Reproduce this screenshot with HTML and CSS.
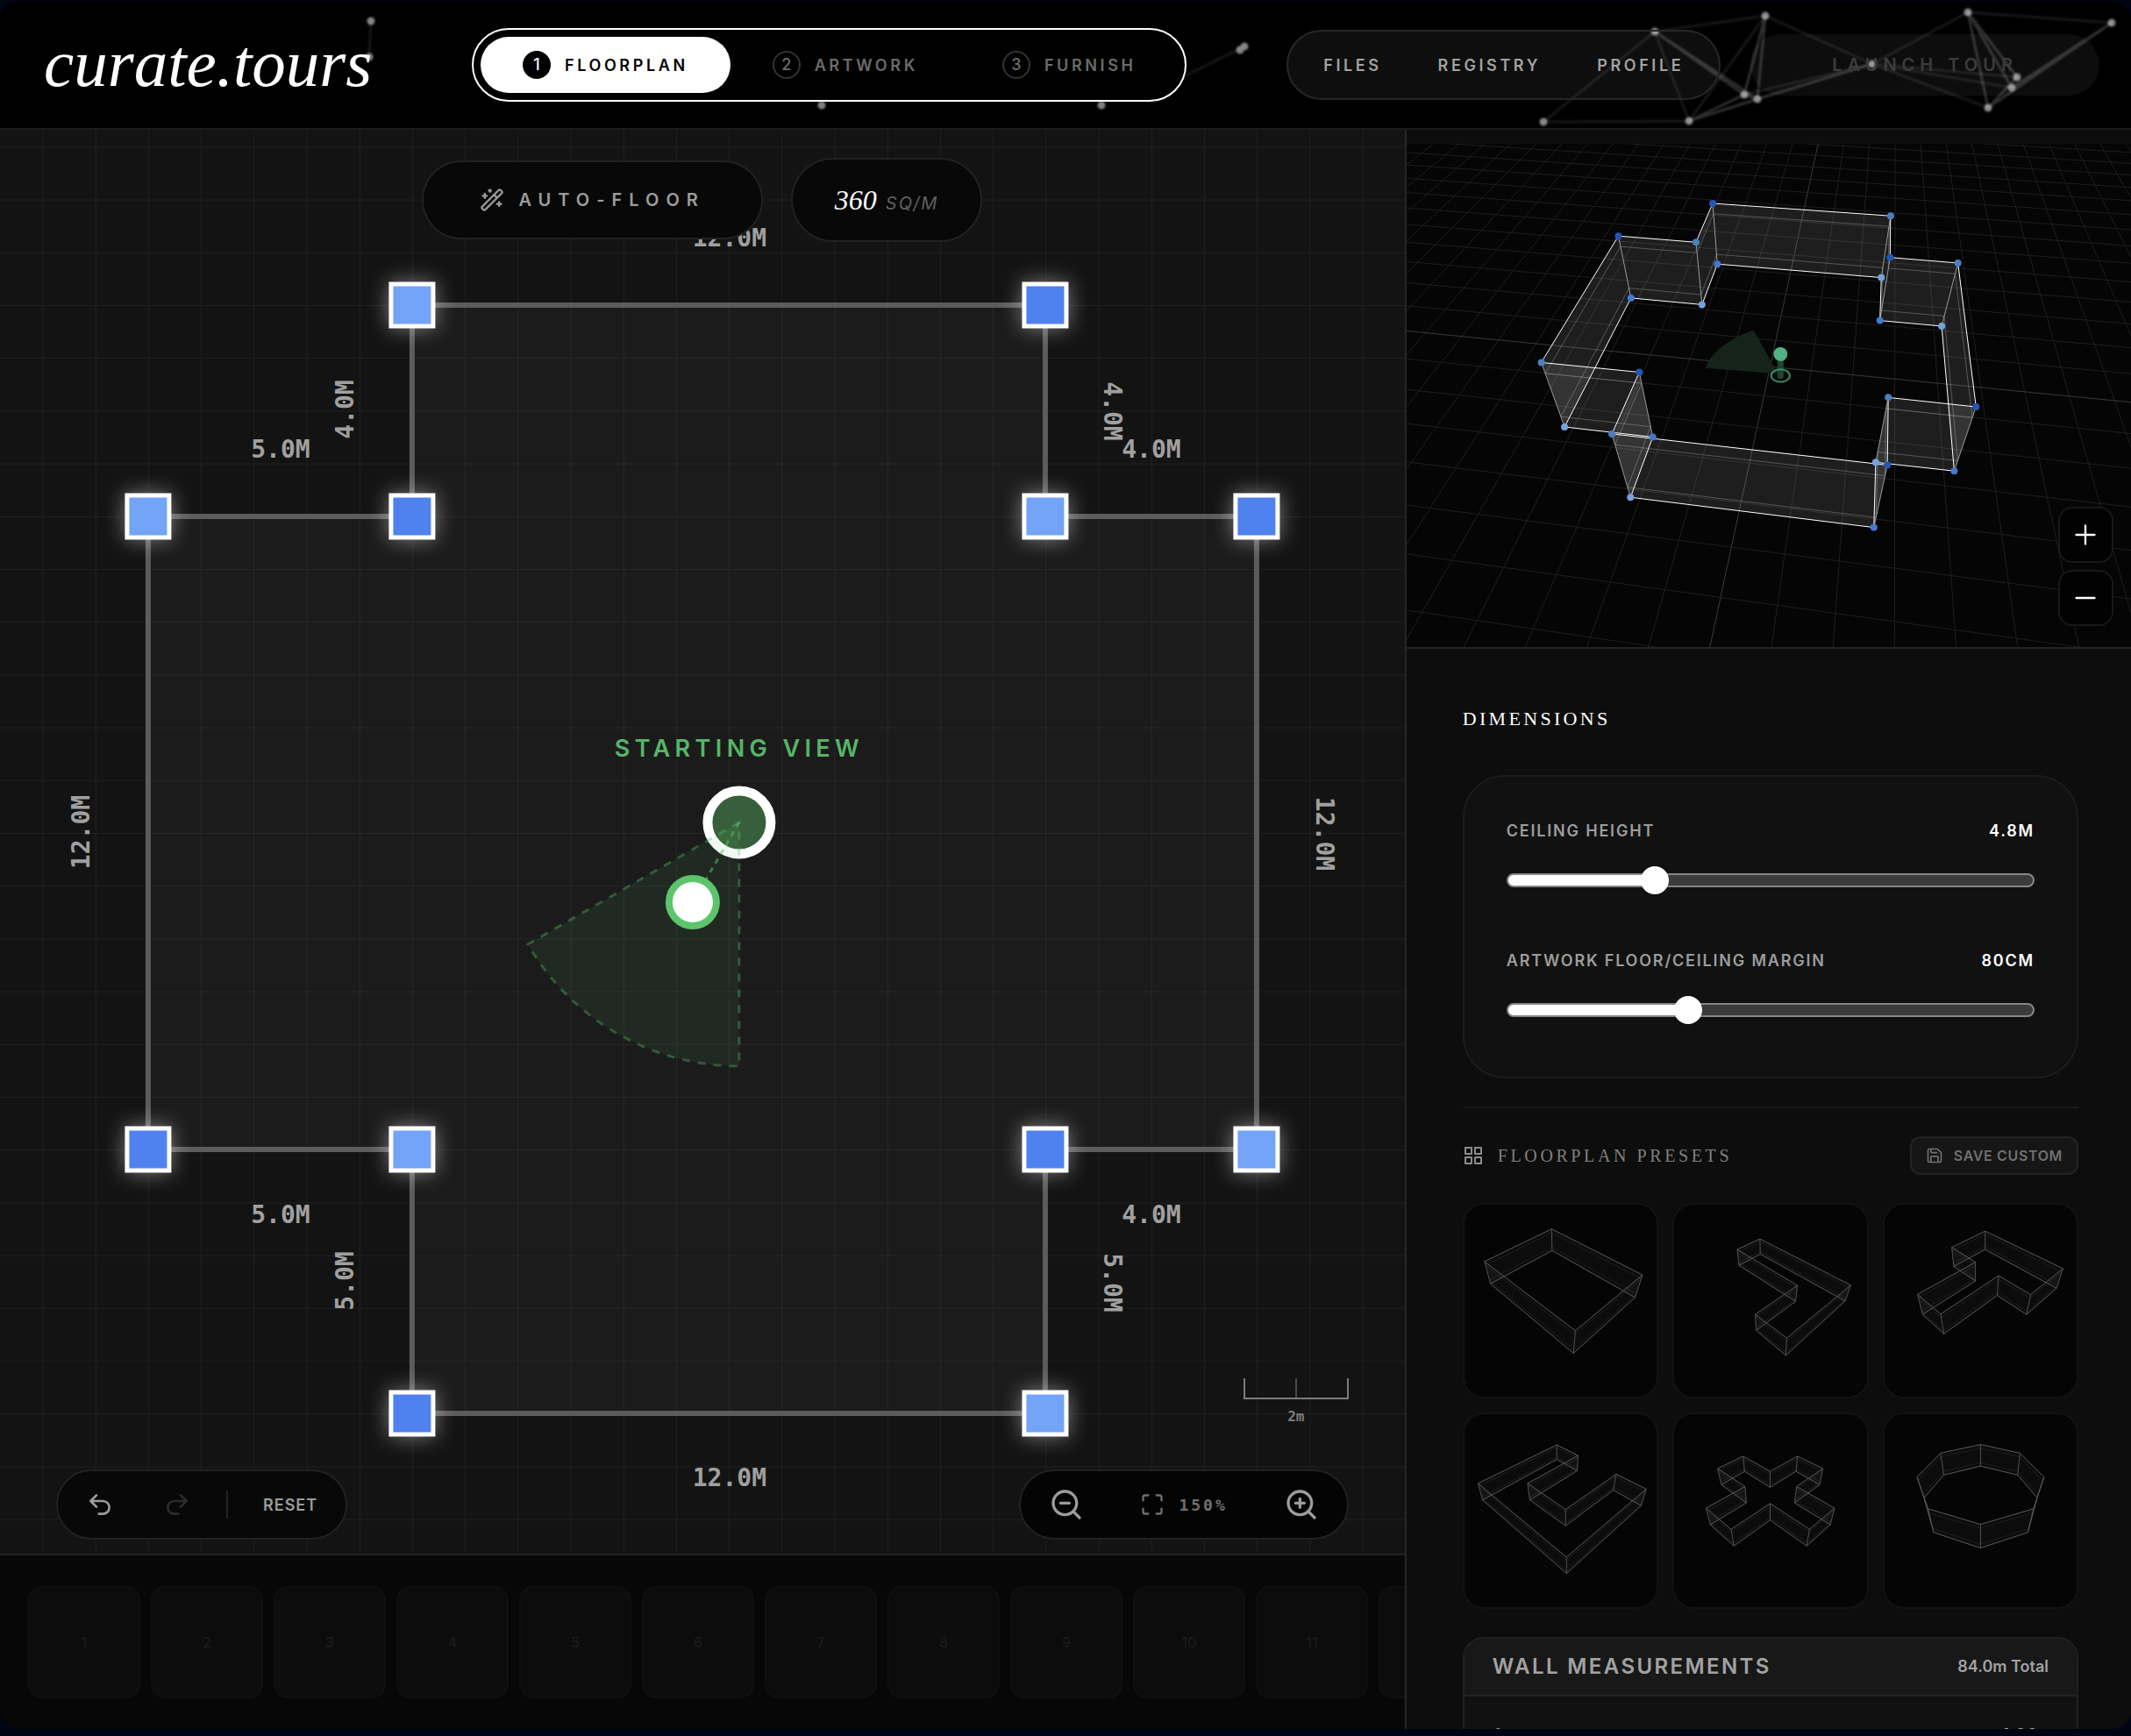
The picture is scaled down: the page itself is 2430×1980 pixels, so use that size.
FILE: index.html
```html
<!DOCTYPE html>
<html lang="en">
<head>
<meta charset="utf-8">
<title>curate.tours – Floorplan</title>
<meta name="viewport" content="width=device-width, initial-scale=1">
<link rel="stylesheet" href="styles.css">
</head>
<body>
<div class="app">
  <header class="topbar">
    <svg class="particles" viewBox="0 2 2430 144" preserveAspectRatio="xMaxYMid slice" aria-hidden="true">
      <path class="link" d="M423 24 421 65M1419 53 1340 92M1887 36 1760 139M1887 36 2013 18M1887 36 1926 138M2013 18 1926 138M2013 18 2135 73M2244 14 2135 73M2244 14 2408 26M1760 139 1926 138M2135 73 1989 108M2135 73 2300 88M2135 73 2294 100M2135 73 2267 123"/>
      <path class="link bright" d="M1887 36 1989 108M1887 36 2004 113M2013 18 1989 108M2013 18 2004 113M2244 14 2300 88M2244 14 2294 100M2244 14 2267 123M2408 26 2267 123M2408 26 2294 100M2300 88 2267 123M2135 73 2004 113M1926 138 1989 108M1926 138 2004 113M2004 113 1989 108"/>
      <path class="spark" d="M423 24h0M421 65h0M937 120h0M1256 120h0M1414 57h0M1419 53h0M1887 36h0M2013 18h0M2244 14h0M2408 26h0M2135 73h0M2300 88h0M2294 100h0M2267 123h0M1989 108h0M2004 113h0M1926 138h0M1760 139h0"/>
    </svg>
    <a class="logo" href="#">curate.tours</a>
    <nav class="stepper" aria-label="Steps">
      <button class="step active" type="button"><span class="num">1</span>FLOORPLAN</button>
      <button class="step" type="button"><span class="num">2</span>ARTWORK</button>
      <button class="step" type="button"><span class="num">3</span>FURNISH</button>
    </nav>
    <div class="account">
      <nav class="links" aria-label="Account">
        <a href="#">FILES</a>
        <a href="#">REGISTRY</a>
        <a href="#">PROFILE</a>
      </nav>
      <button class="launch" type="button" disabled>LAUNCH TOUR</button>
    </div>
  </header>

  <main class="workspace">
    <section class="editor" aria-label="Floorplan editor">
      <div class="canvas">
        <svg class="plan" viewBox="0 148 1602 1624" preserveAspectRatio="xMidYMid slice">
          <defs>
            <pattern id="metre" x="470" y="348" width="60.2" height="60.2" patternUnits="userSpaceOnUse">
              <path d="M0 0H60.2M0 0V60.2"/>
            </pattern>
          </defs>
          <path class="room" d="M470 348H1192V589H1433V1311H1192V1612H470V1311H169V589H470Z"/>
          <rect class="metres" x="-400" y="-200" width="2400" height="2400" fill="url(#metre)"/>
          <path class="walls" d="M470 348H1192V589H1433V1311H1192V1612H470V1311H169V589H470Z"/>
          <g class="nodes">
            <rect class="lit" x="446" y="324" width="48" height="48"/>
            <rect x="1168" y="324" width="48" height="48"/>
            <rect class="lit" x="1168" y="565" width="48" height="48"/>
            <rect x="1409" y="565" width="48" height="48"/>
            <rect class="lit" x="1409" y="1287" width="48" height="48"/>
            <rect x="1168" y="1287" width="48" height="48"/>
            <rect class="lit" x="1168" y="1588" width="48" height="48"/>
            <rect x="446" y="1588" width="48" height="48"/>
            <rect class="lit" x="446" y="1287" width="48" height="48"/>
            <rect x="145" y="1287" width="48" height="48"/>
            <rect class="lit" x="145" y="565" width="48" height="48"/>
            <rect x="446" y="565" width="48" height="48"/>
          </g>
          <g class="lengths">
            <text x="832" y="281">12.0M</text>
            <text x="1313" y="522">4.0M</text>
            <text x="1313" y="1395">4.0M</text>
            <text x="832" y="1695">12.0M</text>
            <text x="320" y="1395">5.0M</text>
            <text x="320" y="522">5.0M</text>
            <text transform="translate(1259 469) rotate(90)">4.0M</text>
            <text transform="translate(1501 951) rotate(90)">12.0M</text>
            <text transform="translate(1259 1463) rotate(90)">5.0M</text>
            <text transform="translate(403 1461) rotate(-90)">5.0M</text>
            <text transform="translate(102 949) rotate(-90)">12.0M</text>
            <text transform="translate(403 467) rotate(-90)">4.0M</text>
          </g>
          <g class="viewpoint">
            <text x="843" y="863">STARTING VIEW</text>
            <circle class="eye" cx="843" cy="938" r="36"/>
            <path class="cone" d="M843 938 602 1077A278 278 0 0 0 843 1216Z"/>
            <path class="aim" d="M843 938 790 1029"/>
            <circle class="handle" cx="790" cy="1029" r="27"/>
          </g>
        </svg>

        <div class="tools-top">
          <button class="auto" type="button">
            <svg class="icon s28" viewBox="0 0 24 24"><path d="m21.64 3.64-1.28-1.28a1.21 1.21 0 0 0-1.72 0L2.36 18.64a1.21 1.21 0 0 0 0 1.72l1.28 1.28a1.2 1.2 0 0 0 1.72 0L21.64 5.36a1.2 1.2 0 0 0 0-1.72M14 7l3 3M5 6v4M19 14v4M10 2v2M7 8H3M21 16h-4M11 3H9"/></svg>
            AUTO-FLOOR
          </button>
          <p class="area"><span class="area-value">360</span><span class="area-unit">SQ/M</span></p>
        </div>

        <div class="tools-bottom">
          <div class="dock">
            <button type="button" aria-label="Undo"><svg class="icon s32" viewBox="0 0 24 24"><path d="M9 14 4 9l5-5M4 9h10.5a5.5 5.5 0 0 1 0 11H11"/></svg></button>
            <button type="button" aria-label="Redo" disabled><svg class="icon s32" viewBox="0 0 24 24"><path d="m15 14 5-5-5-5M20 9H9.5a5.5 5.5 0 0 0 0 11H13"/></svg></button>
            <span class="rule"></span>
            <button class="reset" type="button">RESET</button>
          </div>
          <div class="zoom-side">
            <div class="scale"><span class="ticks"></span><span class="scale-text">2m</span></div>
            <div class="dock dark">
              <button type="button" aria-label="Zoom out"><svg class="icon s40" viewBox="0 0 24 24"><circle cx="11" cy="11" r="8"/><path d="m21 21-4.3-4.3M8 11h6"/></svg></button>
              <button class="fit" type="button"><svg class="icon s28" viewBox="0 0 24 24"><path d="M8 3H5a2 2 0 0 0-2 2v3M21 8V5a2 2 0 0 0-2-2h-3M3 16v3a2 2 0 0 0 2 2h3M16 21h3a2 2 0 0 0 2-2v-3"/></svg>150%</button>
              <button type="button" aria-label="Zoom in"><svg class="icon s40" viewBox="0 0 24 24"><circle cx="11" cy="11" r="8"/><path d="m21 21-4.3-4.3M11 8v6M8 11h6"/></svg></button>
            </div>
          </div>
        </div>
      </div>

      <ol class="slots" aria-label="Artwork slots">
        <li>1</li><li>2</li><li>3</li><li>4</li><li>5</li><li>6</li><li>7</li><li>8</li><li>9</li><li>10</li><li>11</li><li></li>
      </ol>
    </section>

    <aside class="panel">
      <div class="preview">
        <svg class="scene" viewBox="8 60 1560 1452" preserveAspectRatio="none" role="img" aria-label="3D preview">
          <g class="floor" id="floor"></g>
          <path class="sight" d="M808 724 755 598C705 618 660 665 652 707Z"/>
          <path class="stem" d="M813 686V730"/>
          <ellipse class="base" cx="813" cy="729" rx="20" ry="18"/>
          <ellipse class="head" cx="813" cy="667" rx="15" ry="20"/>
          <g class="wire main" data-knobs
             data-top="667,232 1050,268 1049,388 1195,404 1234,819 1045,792 1043,987 450,897 509,719 298,691 464,326 631,344"
             data-base="677,407 1030,446 1027,570 1160,586 1187,1004 1018,979 1014,1167 490,1080 538,906 348,877 491,505 644,524"></g>
        </svg>
        <div class="preview-zoom">
          <button type="button" aria-label="Zoom in preview"><svg class="icon s28" viewBox="0 0 24 24"><path d="M3 12h18M12 3v18"/></svg></button>
          <button type="button" aria-label="Zoom out preview"><svg class="icon s28" viewBox="0 0 24 24"><path d="M3 12h18"/></svg></button>
        </div>
      </div>

      <div class="settings">
        <h2 class="heading">DIMENSIONS</h2>
        <div class="card">
          <div class="control">
            <div class="control-top"><label for="ceiling">CEILING HEIGHT</label><output for="ceiling">4.8M</output></div>
            <input id="ceiling" type="range" min="20" max="125" value="48" style="--fill:27%">
          </div>
          <div class="control">
            <div class="control-top"><label for="margin">ARTWORK FLOOR/CEILING MARGIN</label><output for="margin">80CM</output></div>
            <input id="margin" type="range" min="40" max="160" value="80" style="--fill:34%">
          </div>
        </div>

        <section class="presets">
          <div class="presets-top">
            <h3><svg class="icon s24" viewBox="0 0 24 24"><path d="M3 3h7v7H3zM14 3h7v7h-7zM14 14h7v7h-7zM3 14h7v7H3z"/></svg>FLOORPLAN PRESETS</h3>
            <button class="save" type="button"><svg class="icon s20" viewBox="0 0 24 24"><path d="M15.2 3a2 2 0 0 1 1.4.6l3.8 3.8a2 2 0 0 1 .6 1.4V19a2 2 0 0 1-2 2H5a2 2 0 0 1-2-2V5a2 2 0 0 1 2-2zM17 21v-7a1 1 0 0 0-1-1H8a1 1 0 0 0-1 1v7M7 3v4a1 1 0 0 0 1 1h7"/></svg>SAVE CUSTOM</button>
          </div>
          <div class="preset-grid">
            <button type="button" aria-label="Rectangle"><svg viewBox="132 60 415 545" preserveAspectRatio="none"><g class="wire"
              data-top="320,129 516,259 371,417 175,221"
              data-base="321,190 500,323 367,481 188,284"></g></svg></button>
            <button type="button" aria-label="L shape"><svg viewBox="584 60 415 545" preserveAspectRatio="none"><g class="wire"
              data-top="769,157 965,288 827,438 759,371 850,289 720,187"
              data-base="770,200 953,333 825,487 761,416 846,334 724,232"></g></svg></button>
            <button type="button" aria-label="T shape"><svg viewBox="1037 60 415 545" preserveAspectRatio="none"><g class="wire"
              data-top="1254,135 1422,241 1352,315 1283,261 1158,370 1108,314 1233,223 1182,181"
              data-base="1254,187 1408,297 1343,371 1280,317 1165,426 1119,371 1233,276 1186,235"></g></svg></button>
            <button type="button" aria-label="U shape"><svg viewBox="132 656 415 545" preserveAspectRatio="none"><g class="wire"
              data-top="331,743 377,773 268,852 350,926 459,826 524,868 352,1061 161,852"
              data-base="331,784 375,816 273,899 350,972 453,871 513,915 352,1107 171,899"></g></svg></button>
            <button type="button" aria-label="Cross"><svg viewBox="584 656 415 545" preserveAspectRatio="none"><g class="wire"
              data-top="733,775 791,818 850,775 905,810 848,861 930,922 876,982 791,909 707,982 653,922 737,861 678,810"
              data-base="736,818 791,863 847,818 898,856 844,907 921,969 870,1029 791,956 713,1029 662,969 740,907 686,856"></g></svg></button>
            <button type="button" aria-label="Octagon"><svg viewBox="1037 656 415 545" preserveAspectRatio="none"><g class="wire"
              data-top="1244,742 1329,766 1381,834 1358,924 1244,968 1131,924 1107,834 1158,766"
              data-base="1244,803 1324,828 1366,893 1346,991 1244,1035 1143,991 1122,893 1165,828"></g></svg></button>
          </div>
        </section>

        <section class="measures">
          <div class="measures-top"><h3>WALL MEASUREMENTS</h3><span>84.0m Total</span></div>
          <table>
            <tr><th scope="row">A</th><td class="small">360</td><td>4.00</td></tr>
          </table>
        </section>
      </div>
    </aside>
  </main>
</div>
<script src="wireframe.js"></script>
</body>
</html>
```
FILE: styles.css
```css
* {
  box-sizing: border-box;
}

body {
  margin: 0;
  height: 100vh;
  padding: 2px 0 8px;
  background: #010412;
  color: #9c9c9c;
  font-family: Inter, "Liberation Sans", sans-serif;
  font-size: 18px;
}

button {
  margin: 0;
  padding: 0;
  border: 0;
  background: none;
  color: inherit;
  font: inherit;
}

h2, h3, p, ol {
  margin: 0;
  padding: 0;
}

.icon {
  flex: none;
  fill: none;
  stroke: currentColor;
  stroke-width: 2;
  stroke-linecap: round;
  stroke-linejoin: round;
}

.s20 { width: 20px; height: 20px; }
.s24 { width: 24px; height: 24px; }
.s28 { width: 28px; height: 28px; }
.s32 { width: 32px; height: 32px; }
.s40 { width: 40px; height: 40px; }

.app {
  display: flex;
  flex-direction: column;
  height: 100%;
  overflow: hidden;
  border-radius: 20px;
  background: #000;
}

/* Header */
.topbar {
  position: relative;
  display: flex;
  align-items: center;
  justify-content: space-between;
  height: 146px;
  padding: 0 36px 0 50px;
  border-bottom: 2px solid #1b1b1b;
}

.particles {
  position: absolute;
  inset: 0;
  width: 100%;
  height: 100%;
  fill: none;
  stroke: #fff;
  stroke-linecap: round;
  filter: blur(1px);
}

.link { stroke-width: 3; stroke-opacity: .09; }
.bright { stroke-opacity: .18; }
.spark { stroke-width: 9; stroke-opacity: .5; }

.logo, .stepper, .account {
  position: relative;
}

.logo {
  padding-bottom: 4px;
  color: #fff;
  font: italic 77px/84px "Liberation Serif", serif;
  text-decoration: none;
}

.stepper {
  display: flex;
  padding: 8px;
  border: 2px solid #fff;
  border-radius: 42px;
  background: #000;
}

.step {
  display: flex;
  align-items: center;
  gap: 16px;
  height: 64px;
  padding: 0 48px;
  border-radius: 32px;
  color: #6c6c6c;
  font-weight: 600;
  letter-spacing: .2em;
}

.num {
  width: 32px;
  height: 32px;
  border: 2px solid #333;
  border-radius: 16px;
  font-weight: 500;
  line-height: 28px;
  letter-spacing: 0;
}

.active {
  background: #fff;
  color: #000;
}

.active .num {
  border-color: #000;
  background: #000;
  color: #fff;
}

.account {
  display: flex;
  align-items: center;
  gap: 34px;
}

.links {
  display: flex;
  align-items: center;
  height: 80px;
  padding: 0 8px;
  border: 2px solid #262626;
  border-radius: 40px;
  background: rgba(255, 255, 255, .055);
}

.links a {
  padding: 0 32px;
  color: #a2a2a2;
  font-weight: 600;
  letter-spacing: .2em;
  text-decoration: none;
}

.launch {
  height: 70px;
  padding: 0 93px;
  border-radius: 35px;
  background: rgba(255, 255, 255, .05);
  color: #3c3c3c;
  font-size: 20px;
  font-weight: 600;
  letter-spacing: .3em;
}

/* Work area */
.workspace {
  display: grid;
  grid-template-columns: 66fr 34fr;
  flex: 1;
  min-height: 0;
}

.editor {
  display: flex;
  flex-direction: column;
  min-width: 0;
  border-right: 2px solid #262626;
}

.canvas {
  position: relative;
  display: flex;
  flex: 1;
  flex-direction: column;
  justify-content: space-between;
  min-height: 0;
  padding: 32px 64px 16px;
  overflow: hidden;
  background: #131313;
}

/* Floor plan drawing */
.plan {
  position: absolute;
  inset: 0;
  width: 100%;
  height: 100%;
}

.plan pattern path { fill: none; stroke: #fff; stroke-opacity: .05; stroke-width: 2; }
.room { fill: #fff; fill-opacity: .035; }
.walls { fill: none; stroke: #5c5c5c; stroke-width: 6; }

.nodes rect {
  fill: #4f82ee;
  stroke: #fff;
  stroke-width: 5;
  filter: drop-shadow(0 0 12px rgba(255, 255, 255, .45));
}

.nodes .lit { fill: #74a4f7; }

.lengths {
  fill: #a0a0a0;
  font: bold 28px "DejaVu Sans Mono", monospace;
  text-anchor: middle;
}

.viewpoint text {
  fill: #56b568;
  font-size: 27px;
  font-weight: 600;
  letter-spacing: .2em;
  text-anchor: middle;
}

.eye { fill: #375f3b; stroke: #fff; stroke-width: 11; }
.cone { fill: rgba(93, 196, 108, .09); stroke: rgba(93, 196, 108, .35); stroke-width: 3; stroke-dasharray: 9 9; }
.aim { fill: none; stroke: rgba(93, 196, 108, .5); stroke-width: 3; stroke-dasharray: 6 6; }
.handle { fill: #fff; stroke: #5dc46c; stroke-width: 8; }

/* Canvas controls */
.tools-top {
  position: relative;
  display: flex;
  align-items: center;
  justify-content: center;
  gap: 32px;
}

.auto {
  display: flex;
  align-items: center;
  gap: 16px;
  height: 90px;
  padding: 0 64px;
  border: 2px solid #212121;
  border-radius: 45px;
  background: #080808;
  font-size: 20px;
  font-weight: 600;
  letter-spacing: .4em;
}

.area {
  display: flex;
  align-items: baseline;
  gap: 10px;
  height: 96px;
  padding: 0 48px;
  border: 2px solid #212121;
  border-radius: 48px;
  background: #080808;
  font-style: italic;
  line-height: 92px;
}

.area-value { color: #fff; font-family: "Liberation Serif", serif; font-size: 32px; }
.area-unit { color: #5f5f5f; font-size: 20px; letter-spacing: 2px; }

.tools-bottom {
  position: relative;
  display: flex;
  align-items: flex-end;
  justify-content: space-between;
}

.dock {
  display: flex;
  align-items: center;
  gap: 8px;
  height: 80px;
  padding: 0 8px;
  border: 2px solid #212121;
  border-radius: 40px;
  background: #080808;
}

.dark { background: #040404; }

.dock button {
  display: flex;
  align-items: center;
  height: 60px;
  padding: 0 24px;
}

.dock button:disabled { color: #2b2b2b; }

.rule {
  width: 2px;
  height: 32px;
  margin: 0 8px;
  background: #242424;
}

.reset {
  font-weight: 600;
  letter-spacing: 1px;
}

.dock .fit {
  gap: 16px;
  padding: 0 32px;
  color: #707070;
  font-family: "DejaVu Sans Mono", monospace;
  font-weight: 700;
  letter-spacing: 3px;
}

.zoom-side {
  display: flex;
  flex-direction: column;
  align-items: flex-end;
  gap: 50px;
}

.scale {
  display: flex;
  flex-direction: column;
  align-items: center;
  gap: 10px;
}

.ticks {
  width: 120px;
  height: 24px;
  border: solid #7b7b7b;
  border-width: 0 2px 2px;
  background: linear-gradient(#4a4a4a, #4a4a4a) center / 2px 100% no-repeat;
}

.scale-text {
  color: #7d7d7d;
  font: bold 16px/20px "DejaVu Sans Mono", monospace;
}

.slots {
  display: flex;
  gap: 12px;
  padding: 35px 32px;
  overflow: hidden;
  border-top: 2px solid #212121;
  background: #070707;
  list-style: none;
}

.slots li {
  flex: none;
  width: 128px;
  height: 128px;
  border: 2px solid #101010;
  border-radius: 16px;
  background: #0c0c0c;
  color: #1b1b1b;
  font-size: 16px;
  font-weight: 500;
  line-height: 124px;
  text-align: center;
}

/* Right panel */
.panel {
  display: flex;
  flex-direction: column;
  min-width: 0;
  min-height: 0;
  padding-top: 16px;
  overflow: hidden;
  background: #0d0d0d;
}

.preview {
  position: relative;
  display: flex;
  flex: none;
  align-items: flex-end;
  justify-content: flex-end;
  height: 576px;
  padding: 24px 20px;
  border-bottom: 2px solid #242424;
  background: #050505;
}

.scene {
  position: absolute;
  inset: 0;
  width: 100%;
  height: 100%;
}

.scene path, .scene ellipse, .wire path {
  vector-effect: non-scaling-stroke;
}

.floor { fill: none; stroke: #1e1e1e; }
.floor .axis { stroke: #3a3a3a; }

.sight { fill: #15231b; }
.stem { fill: none; stroke: #1f4432; stroke-width: 7; stroke-linecap: round; }
.base { fill: none; stroke: #3c8a63; stroke-width: 2; }
.head { fill: #52b184; }

.wire path { fill: none; stroke-linejoin: round; }
.wire .face { fill: #fff; fill-opacity: .03; }
.wire .band { stroke: #fff; stroke-opacity: .07; }
.wire .post { stroke: #505050; }
.wire .edge { stroke: #5a5a5a; }

.main .face { fill-opacity: .1; }
.main .band { stroke-opacity: .25; }
.main .post { stroke: #9a9a9a; }
.main .edge { stroke: #fff; }
.main .knob { stroke-width: 8; stroke-linecap: round; }
.top-a { stroke: #2356b8; }
.top-b { stroke: #4a7fbf; }
.base-a { stroke: #4378d0; }
.base-b { stroke: #73a2dc; }

.preview-zoom {
  position: relative;
  display: flex;
  flex-direction: column;
  gap: 8px;
}

.preview-zoom button {
  display: flex;
  align-items: center;
  justify-content: center;
  width: 63px;
  height: 64px;
  border: 2px solid #181818;
  border-radius: 16px;
  background: #020202;
  color: #fff;
}

.settings {
  flex: 1;
  min-height: 0;
  padding: 64px 60px 0 64px;
  overflow: hidden;
}

.heading {
  margin-bottom: 48px;
  color: #fff;
  font: 22px/32px "Liberation Serif", serif;
  letter-spacing: .15em;
}

.card {
  display: flex;
  flex-direction: column;
  gap: 62px;
  padding: 48px 48px 60px;
  border: 2px solid #1c1c1c;
  border-radius: 48px;
  background: #111;
}

.control {
  display: flex;
  flex-direction: column;
  gap: 26px;
}

.control-top {
  display: flex;
  justify-content: space-between;
  font-weight: 600;
  line-height: 28px;
  letter-spacing: .1em;
}

.control-top output { color: #fff; }

input[type="range"] {
  width: 100%;
  height: 32px;
  margin: 0;
  appearance: none;
  background: none;
}

input[type="range"]::-webkit-slider-runnable-track {
  height: 16px;
  border: 2px solid #868686;
  border-radius: 8px;
  background: linear-gradient(to right, #fff var(--fill), #3b3b3b var(--fill));
}

input[type="range"]::-webkit-slider-thumb {
  width: 32px;
  height: 32px;
  margin-top: -10px;
  appearance: none;
  border-radius: 16px;
  background: #fff;
}

.presets {
  margin-top: 32px;
  padding-top: 32px;
  border-top: 2px solid #181818;
}

.presets-top {
  display: flex;
  align-items: center;
  justify-content: space-between;
  margin-bottom: 32px;
}

.presets h3 {
  display: flex;
  align-items: center;
  gap: 16px;
  color: #808080;
  font: 20px/28px "Liberation Serif", serif;
  letter-spacing: .18em;
}

.presets h3 .icon { color: #8c8c8c; }

.save {
  display: flex;
  align-items: center;
  gap: 12px;
  height: 44px;
  padding: 0 16px;
  border: 2px solid #232323;
  border-radius: 12px;
  background: #161616;
  color: #707070;
  font-size: 16px;
  font-weight: 600;
  letter-spacing: .04em;
}

.preset-grid {
  display: grid;
  grid-template-columns: repeat(3, 1fr);
  gap: 16px;
}

.preset-grid button {
  aspect-ratio: 1;
  border: 2px solid #121212;
  border-radius: 24px;
  background: #050505;
}

.preset-grid svg {
  display: block;
  width: 100%;
  height: 100%;
}

.measures {
  margin-top: 32px;
  overflow: hidden;
  border: 2px solid #212121;
  border-radius: 24px;
  background: #111;
}

.measures-top {
  display: flex;
  align-items: center;
  justify-content: space-between;
  height: 66px;
  padding: 0 32px;
  border-bottom: 2px solid #232323;
  background: #181818;
  color: #a2a2a2;
  font-weight: 600;
}

.measures h3 {
  font-size: 24px;
  font-weight: 600;
  letter-spacing: .1em;
}

.measures table {
  width: 100%;
  padding: 32px 44px 32px 32px;
  border-spacing: 0;
}

.measures th, .measures td {
  padding: 0;
  font-weight: 600;
  line-height: 24px;
  text-align: right;
}

.measures th { text-align: left; }
.measures td { width: 108px; color: #b0b0b0; font-size: 20px; }
.measures .small { color: #8c8c8c; font-size: 16px; }
```
FILE: wireframe.js
```js
const NS = "http://www.w3.org/2000/svg";

function addPath(group, className, d) {
  const path = document.createElementNS(NS, "path");
  path.setAttribute("class", className);
  path.setAttribute("d", d);
  group.append(path);
}

const parse = (text) => text.trim().split(/\s+/).map((p) => p.split(",").map(Number));
const mix = (a, b, t) => [a[0] + (b[0] - a[0]) * t, a[1] + (b[1] - a[1]) * t];
const loop = (points) => "M" + points.join("L") + "Z";

// Each room is an upper and a lower outline; walls join the matching corners.
for (const group of document.querySelectorAll(".wire")) {
  const top = parse(group.dataset.top);
  const base = parse(group.dataset.base);
  top.forEach((corner, i) => {
    const n = (i + 1) % top.length;
    addPath(group, "face", loop([corner, top[n], base[n], base[i]]));
  });
  for (const t of [0.17, 0.84]) {
    addPath(group, "band", loop(top.map((corner, i) => mix(corner, base[i], t))));
  }
  addPath(group, "post", top.map((corner, i) => `M${corner}L${base[i]}`).join(""));
  addPath(group, "edge", loop(base));
  addPath(group, "edge", loop(top));
  if ("knobs" in group.dataset) {
    base.forEach((p, i) => addPath(group, "knob " + (i % 2 ? "base-b" : "base-a"), `M${p}h0`));
    top.forEach((p, i) => addPath(group, "knob " + (i % 2 ? "top-b" : "top-a"), `M${p}h0`));
  }
}

// Ground grid in perspective: one family of lines runs away from the camera, one across it.
const floor = document.getElementById("floor");
for (let k = -16; k <= 12; k++) {
  addPath(floor, k ? "" : "axis", `M${894 + 55.2 * k} 60L${661 + 132.5 * k} 1512`);
}
for (let n = -14; n <= 7; n++) {
  const left = 10000 / (6.309 - 0.3036 * n) - 985;
  addPath(floor, n ? "" : "axis", `M8 ${left}L1568 ${(left + 985) * 1.1298 - 985}`);
}
```
